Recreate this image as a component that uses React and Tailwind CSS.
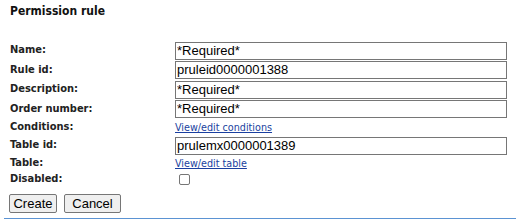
import React from "react";

const labelFont = { fontFamily: '"DejaVu Sans Condensed", "DejaVu Sans", Verdana, sans-serif' };
const inputFont = { fontFamily: '"Liberation Sans", Arial, sans-serif' };

function Row({ label, h, children }) {
  return (
    <div className={`flex items-center ${h}`}>
      <div className="w-[165px] shrink-0 text-[11px] font-bold text-[#222]" style={labelFont}>
        {label}
      </div>
      <div className="flex items-center">{children}</div>
    </div>
  );
}

function TextBox({ value }) {
  return (
    <input
      defaultValue={value}
      className="w-[332px] h-[18px] border border-[#767676] px-[1px] text-[13px] text-black bg-white outline-none"
      style={inputFont}
    />
  );
}

function Link({ children }) {
  return (
    <a href="#" className="text-[10.7px] text-[#1a3fa0] underline leading-[13px]" style={labelFont}>
      {children}
    </a>
  );
}

export default function App() {
  return (
    <div className="w-[516px] h-[224px] bg-white overflow-hidden">
      <div className="pl-[10px] pt-[4px] h-[41px]">
        <h2 className="text-[12px] font-bold text-[#111] leading-[14px]" style={labelFont}>
          Permission rule
        </h2>
      </div>
      <div className="pl-[10px]">
        <Row label="Name:" h="h-[19px]">
          <TextBox value="*Required*" />
        </Row>
        <Row label="Rule id:" h="h-[20px]">
          <TextBox value="pruleid0000001388" />
        </Row>
        <Row label="Description:" h="h-[19px]">
          <TextBox value="*Required*" />
        </Row>
        <Row label="Order number:" h="h-[20px]">
          <TextBox value="*Required*" />
        </Row>
        <Row label="Conditions:" h="h-[17px]">
          <Link>View/edit conditions</Link>
        </Row>
        <Row label="Table id:" h="h-[19px]">
          <TextBox value="prulemx0000001389" />
        </Row>
        <Row label="Table:" h="h-[17px]">
          <Link>View/edit table</Link>
        </Row>
        <Row label="Disabled:" h="h-[15px]">
          <span className="ml-[4px] w-[11px] h-[11px] rounded-[2px] border border-[#767676] bg-white" />
        </Row>
      </div>
      <div className="flex gap-[7px] pl-[9px] mt-[7px]">
        <button
          className="w-[48px] h-[19px] border border-[#767676] rounded-[2px] bg-[#efefef] text-[13px] text-black leading-none"
          style={inputFont}
        >
          Create
        </button>
        <button
          className="w-[57px] h-[19px] border border-[#767676] rounded-[2px] bg-[#efefef] text-[13px] text-black leading-none"
          style={inputFont}
        >
          Cancel
        </button>
      </div>
      <div className="ml-[4px] mt-[5px] h-[1px] bg-[#5b93d3]" />
    </div>
  );
}
